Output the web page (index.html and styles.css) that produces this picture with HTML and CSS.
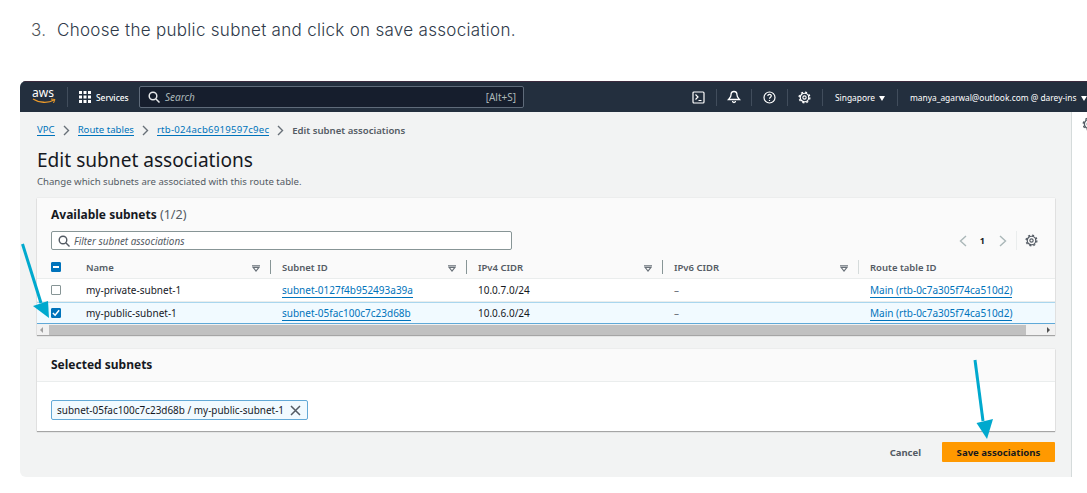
FILE: index.html
```html
<!DOCTYPE html>
<html lang="en">
<head>
  <meta charset="UTF-8" />
  <title>Edit subnet associations</title>
  <link rel="stylesheet" href="styles.css">
</head>
<body>
  <svg class="defs" width="0" height="0">
    <symbol id="engrane" viewBox="0 0 14 14">
      <circle cx="7" cy="7" r="4.600" fill="none" stroke="currentColor" stroke-width="1.300"/>
      <circle cx="7" cy="7" r="5.800" fill="none" stroke="currentColor" stroke-width="1.400" stroke-dasharray="2.200 2.350"/>
      <circle cx="7" cy="7" r="1.800" fill="none" stroke="currentColor" stroke-width="1.200"/>
    </symbol>
  </svg>

  <p class="paso"><span class="paso-num">3.</span>Choose the public subnet and click on save association.</p>

  <div class="captura">
    <header class="nav">
      <div class="logo">
        <span>aws</span>
        <svg width="24" height="6" viewBox="0 0 24 6"><path d="M1 1c6 4 15 4.500 21 1" fill="none" stroke="#ec9a2a" stroke-width="1.400"/><path d="M19 1l4 .5-1.500 3.500" fill="none" stroke="#ec9a2a" stroke-width="1"/></svg>
      </div>
      <div class="servicios">
        <svg width="12" height="12" viewBox="0 0 12 12" fill="#fff"><rect width="3" height="3"/><rect x="4.500" width="3" height="3"/><rect x="9" width="3" height="3"/><rect y="4.500" width="3" height="3"/><rect x="4.500" y="4.500" width="3" height="3"/><rect x="9" y="4.500" width="3" height="3"/><rect y="9" width="3" height="3"/><rect x="4.500" y="9" width="3" height="3"/><rect x="9" y="9" width="3" height="3"/></svg>
        <span>Services</span>
      </div>
      <div class="busqueda">
        <svg width="12" height="12" viewBox="0 0 12 12" fill="none" stroke="#e6e8ea" stroke-width="1.500"><circle cx="5" cy="5" r="3.800"/><path d="M8 8l3.500 3.500"/></svg>
        <em>Search</em>
        <span>[Alt+S]</span>
      </div>
      <div class="nav-der">
        <div class="nav-item">
          <svg width="13" height="13" viewBox="0 0 13 13" fill="none" stroke="#fff" stroke-width="1.200"><rect x="1" y="1" width="11" height="11" rx="1"/><path d="M3.500 3.500l2.500 2.500-2.500 2.500M6.500 9.500h3"/></svg>
        </div>
        <div class="nav-item">
          <svg width="14" height="14" viewBox="0 0 14 14" fill="none" stroke="#fff" stroke-width="1.300"><path d="M7 1.500c-2.300 0-3 1.800-3 3.500 0 2-1.200 3-2.500 4.500h11C11.200 8 10 7 10 5c0-1.700-.7-3.500-3-3.500z"/><path d="M5.500 11a1.500 1.500 0 003 0" /></svg>
        </div>
        <div class="nav-item">
          <svg width="13" height="13" viewBox="0 0 13 13" fill="none" stroke="#fff" stroke-width="1.200"><circle cx="6.500" cy="6.500" r="5.500"/><path d="M4.800 5c0-2.200 3.500-2.200 3.500-.2 0 1.400-1.800 1.400-1.800 3"/><path d="M6.500 9v1"/></svg>
        </div>
        <div class="nav-item">
          <svg class="engrane blanco" width="13" height="13"><use href="#engrane"/></svg>
        </div>
        <div class="nav-texto region">Singapore <i class="caret"></i></div>
        <div class="nav-texto cuenta">manya_agarwal@outlook.com @ darey-ins <i class="caret"></i></div>
      </div>
    </header>

    <div class="cuerpo">
      <main class="contenido">
        <nav class="migas">
          <a>VPC</a>
          <svg class="sep" width="7" height="11" viewBox="0 0 7 11" fill="none" stroke="#687078" stroke-width="1.400"><path d="M1 1l4.500 4.500L1 10"/></svg>
          <a>Route tables</a>
          <svg class="sep" width="7" height="11" viewBox="0 0 7 11" fill="none" stroke="#687078" stroke-width="1.400"><path d="M1 1l4.500 4.500L1 10"/></svg>
          <a class="rtb">rtb-024acb6919597c9ec</a>
          <svg class="sep" width="7" height="11" viewBox="0 0 7 11" fill="none" stroke="#687078" stroke-width="1.400"><path d="M1 1l4.500 4.500L1 10"/></svg>
          <b>Edit subnet associations</b>
        </nav>
        <h1>Edit subnet associations</h1>
        <p class="descripcion">Change which subnets are associated with this route table.</p>

        <section class="tarjeta">
          <div class="tarjeta-top">
            <h2>Available subnets <span>(1/2)</span></h2>
            <div class="filtros">
              <div class="filtro">
                <svg width="12" height="12" viewBox="0 0 12 12" fill="none" stroke="#545b64" stroke-width="1.400"><circle cx="5" cy="5" r="3.800"/><path d="M8 8l3.500 3.500"/></svg>
                <em>Filter subnet associations</em>
              </div>
              <div class="paginas">
                <svg width="8" height="12" viewBox="0 0 8 12" fill="none" stroke="#aab7b8" stroke-width="1.400"><path d="M7 1L1.500 6 7 11"/></svg>
                <b>1</b>
                <svg width="8" height="12" viewBox="0 0 8 12" fill="none" stroke="#aab7b8" stroke-width="1.400"><path d="M1 1l5.500 5L1 11"/></svg>
                <span class="pag-sep"></span>
                <svg class="engrane" width="13" height="13"><use href="#engrane"/></svg>
              </div>
            </div>
          </div>

          <div class="fila fila-head">
            <div class="col-check"><span class="check marcado"><i class="menos"></i></span></div>
            <div class="col">Name<svg class="orden" width="8" height="7" viewBox="0 0 8 7" fill="none" stroke="#687078" stroke-width="1.200"><path d="M0 .8h8M1.200 2.500L4 6l2.800-3.500z"/></svg></div>
            <div class="col">Subnet ID<svg class="orden" width="8" height="7" viewBox="0 0 8 7" fill="none" stroke="#687078" stroke-width="1.200"><path d="M0 .8h8M1.200 2.500L4 6l2.800-3.500z"/></svg></div>
            <div class="col">IPv4 CIDR<svg class="orden" width="8" height="7" viewBox="0 0 8 7" fill="none" stroke="#687078" stroke-width="1.200"><path d="M0 .8h8M1.200 2.500L4 6l2.800-3.500z"/></svg></div>
            <div class="col">IPv6 CIDR<svg class="orden" width="8" height="7" viewBox="0 0 8 7" fill="none" stroke="#687078" stroke-width="1.200"><path d="M0 .8h8M1.200 2.500L4 6l2.800-3.500z"/></svg></div>
            <div class="col ultima">Route table ID</div>
          </div>
          <div class="fila">
            <div class="col-check"><span class="check"></span></div>
            <div class="col">my-private-subnet-1</div>
            <div class="col"><a>subnet-0127f4b952493a39a</a></div>
            <div class="col">10.0.7.0/24</div>
            <div class="col gris">–</div>
            <div class="col ultima"><a>Main (rtb-0c7a305f74ca510d2)</a></div>
          </div>
          <div class="fila activa">
            <div class="col-check">
              <span class="check marcado">
                <svg width="9" height="8" viewBox="0 0 9 8" fill="none" stroke="#fff" stroke-width="1.700"><path d="M1 4l2.500 2.500L8 1"/></svg>
              </span>
            </div>
            <div class="col">my-public-subnet-1</div>
            <div class="col"><a>subnet-05fac100c7c23d68b</a></div>
            <div class="col">10.0.6.0/24</div>
            <div class="col gris">–</div>
            <div class="col ultima"><a>Main (rtb-0c7a305f74ca510d2)</a></div>
          </div>
          <div class="scroll">
            <i class="flecha izq"></i>
            <div class="scroll-barra"></div>
            <i class="flecha der"></i>
          </div>
        </section>

        <section class="tarjeta segunda">
          <div class="tarjeta-titulo"><h2>Selected subnets</h2></div>
          <div class="tarjeta-cuerpo">
            <div class="chip">
              <span>subnet-05fac100c7c23d68b / my-public-subnet-1</span>
              <svg width="11" height="11" viewBox="0 0 11 11" fill="none" stroke="#545b64" stroke-width="1.500"><path d="M1 1l9 9M10 1l-9 9"/></svg>
            </div>
          </div>
        </section>

        <div class="acciones">
          <a class="cancelar">Cancel</a>
          <button class="guardar">Save associations</button>
        </div>
      </main>
      <aside class="lateral">
        <svg class="engrane" width="14" height="14"><use href="#engrane"/></svg>
      </aside>
    </div>
  </div>

  <!-- flechas puestas encima de la captura -->
  <svg class="flechas" width="1087" height="493" viewBox="0 0 1087 493">
    <path d="M22.500 244L41 303" stroke="#00a9ce" stroke-width="3" fill="none"/>
    <path d="M33 306l15-5 1 17z" fill="#00a9ce"/>
    <path d="M975 360l8 61" stroke="#00a9ce" stroke-width="3" fill="none"/>
    <path d="M976.500 423l16.500-4-6 20z" fill="#00a9ce"/>
  </svg>
</body>
</html>
```

FILE: styles.css
```css
* {
  box-sizing: border-box;
}

html, body {
  height: 493px;
  overflow: hidden;
}

body {
  margin: 0;
  background-color: #ffffff;
  font-family: "Noto Sans", sans-serif;
  font-size: 10px;
  color: #16191f;
  position: relative;
}

.defs {
  position: absolute;
}

.engrane {
  color: #545b64;
}

.engrane.blanco {
  color: #ffffff;
}

.paso {
  margin: 0;
  padding: 19px 0 0 31px;
  height: 81px;
  font-family: "Inter", sans-serif;
  font-size: 17px;
  font-weight: 300;
  line-height: 22px;
  letter-spacing: 0.3px;
  color: #2f3a4a;
}

.paso-num {
  display: inline-block;
  width: 26px;
  color: #4f5358;
}

.captura {
  margin-left: 20px;
  height: 396px;
  border-radius: 6px 0 0 6px;
  overflow: hidden;
  background-color: #f2f3f3;
}

/* barra superior */
.nav {
  display: flex;
  align-items: center;
  height: 31px;
  background-color: #232f3e;
  border-top: 1px solid #3a2a3d;
  color: #ffffff;
  white-space: nowrap;
}

.nav > div {
  flex-shrink: 0;
}

.logo {
  width: 47px;
  padding-left: 12px;
  display: flex;
  flex-direction: column;
  font-size: 12px;
  line-height: 10px;
  height: 18px;
}

.servicios {
  display: flex;
  align-items: center;
  gap: 5px;
  width: 72px;
  padding-left: 11px;
  height: 20px;
  border-left: 1px solid #414d5c;
  font-size: 8.400px;
  font-weight: 500;
}

.busqueda {
  display: flex;
  align-items: center;
  width: 385px;
  height: 22px;
  padding: 0 7px 0 8px;
  background-color: #161e2d;
  border: 1px solid #5f6b7a;
  border-radius: 2px;
  color: #aab7b8;
  font-size: 10px;
}

.busqueda svg {
  margin-right: 5px;
}

.busqueda em {
  flex: 1;
}

.nav-der {
  display: flex;
  align-items: center;
  margin-left: 157px;
}

.nav-item {
  width: 35.500px;
  height: 17px;
  display: flex;
  align-items: center;
  justify-content: center;
  border-right: 1px solid #414d5c;
}

.nav-texto {
  font-size: 8.400px;
  height: 17px;
  line-height: 17px;
  white-space: nowrap;
}

.region {
  width: 75px;
  padding-left: 12px;
  border-right: 1px solid #414d5c;
}

.cuenta {
  padding-left: 12px;
}

.caret {
  display: inline-block;
  margin-left: 2px;
  border-left: 3px solid transparent;
  border-right: 3px solid transparent;
  border-top: 5px solid #ffffff;
}

/* contenido */
.cuerpo {
  display: flex;
  height: 365px;
}

.contenido {
  width: 1051px;
  flex-shrink: 0;
  padding: 11px 0 0 17px;
}

.lateral {
  flex: 1;
  background-color: #ffffff;
  border-left: 1px solid #d5dbdb;
  padding: 5px 0 0 10px;
}

.migas {
  display: flex;
  align-items: center;
  height: 14px;
  gap: 8px;
  font-size: 9.600px;
}

.migas a {
  color: #0073bb;
  border-bottom: 1px solid #0073bb;
  line-height: 11px;
}

.migas .rtb {
  letter-spacing: 0.24px;
}

.migas b {
  color: #545b64;
  font-weight: 600;
}

h1 {
  margin: 10px 0 0;
  font-size: 19.100px;
  font-weight: 400;
  line-height: 26px;
  color: #16191f;
}

.descripcion {
  margin: 2px 0 0;
  font-size: 9.600px;
  line-height: 14px;
  color: #545b64;
}

.tarjeta {
  width: 1018px;
  background-color: #ffffff;
  box-shadow: 0 1px 1px rgba(0, 0, 0, 0.3), 0 0 1px rgba(0, 0, 0, 0.15);
}

.tarjeta-top {
  margin-top: 9px;
  height: 60px;
  padding: 8px 14px 0;
  background-color: #fafafa;
}

.tarjeta h2 {
  margin: 0;
  font-size: 12px;
  font-weight: 700;
  line-height: 17px;
}

.tarjeta h2 span {
  font-size: 12.600px;
  font-weight: 400;
  color: #545b64;
}

.filtros {
  display: flex;
  align-items: center;
  margin-top: 8px;
}

.filtro {
  display: flex;
  align-items: center;
  gap: 4px;
  width: 461px;
  height: 19px;
  padding-left: 6px;
  background-color: #ffffff;
  border: 1px solid #879596;
  border-radius: 2px;
  color: #545b64;
  font-size: 9.900px;
}

.paginas {
  display: flex;
  align-items: center;
  margin-left: auto;
  margin-right: 3px;
  font-size: 9px;
}

.paginas b {
  margin: 0 14px 0 13px;
  color: #16191f;
}

.pag-sep {
  width: 1px;
  height: 19px;
  margin: 0 8px 0 9px;
  background-color: #eaeded;
}

.fila {
  display: flex;
  align-items: center;
  height: 22.500px;
  font-size: 10px;
  color: #16191f;
  border-bottom: 1px solid #eaeded;
}

.fila-head {
  height: 21px;
  padding-bottom: 2px;
  background-color: #fafafa;
  color: #545b64;
  font-size: 9.500px;
  font-weight: 600;
  border-bottom: 1px solid #eaeded;
}

.fila.activa {
  background-color: #f1faff;
  border-top: 1px solid #a9d6ee;
  border-bottom: 1px solid #5fa9d8;
  height: 22.500px;
}

.col-check {
  width: 38px;
  padding-left: 14px;
  display: flex;
}

.check {
  width: 10px;
  height: 10px;
  background-color: #ffffff;
  border: 1px solid #879596;
  border-radius: 1px;
  display: flex;
  align-items: center;
  justify-content: center;
}

.check.marcado {
  background-color: #0073bb;
  border-color: #0073bb;
}

.menos {
  width: 6px;
  height: 2px;
  background-color: #ffffff;
}

.col {
  width: 196px;
  padding-left: 11px;
  position: relative;
  white-space: nowrap;
}

.fila-head .col:not(.ultima)::after {
  content: "";
  position: absolute;
  right: 0;
  top: -1px;
  height: 14px;
  width: 1px;
  background-color: #879596;
}

.fila-head .col:nth-child(5)::after {
  background-color: #d5dbdb;
}

.ultima {
  width: 194px;
}

.gris {
  color: #687078;
}

.col a {
  color: #0073bb;
  border-bottom: 1px solid #0073bb;
}

.orden {
  position: absolute;
  right: 11px;
  top: 4px;
}

.scroll {
  display: flex;
  align-items: center;
  height: 11px;
  background-color: #f1f1f1;
}

.scroll-barra {
  width: 977px;
  height: 10px;
  margin-left: 6px;
  background-color: #c1c1c1;
}

.flecha {
  display: block;
  border-top: 3px solid transparent;
  border-bottom: 3px solid transparent;
}

.flecha.izq {
  margin-left: 3px;
  border-right: 3px solid #a0a0a0;
}

.flecha.der {
  margin-left: 21px;
  border-left: 3px solid #505050;
}

.segunda {
  margin-top: 14px;
}

.tarjeta-titulo {
  height: 33px;
  padding: 7px 14px 0;
  background-color: #fafafa;
  border-bottom: 1px solid #eaeded;
}

.tarjeta-cuerpo {
  height: 49px;
  padding: 18px 14px 0;
}

.chip {
  display: inline-flex;
  align-items: center;
  gap: 6px;
  height: 20px;
  padding: 0 6px 0 5px;
  background-color: #f1faff;
  border: 1px solid #63a9d6;
  border-radius: 2px;
  font-size: 9.950px;
  color: #16191f;
}

.acciones {
  display: flex;
  align-items: center;
  justify-content: flex-end;
  width: 1018px;
  margin-top: 11px;
  gap: 21px;
}

.cancelar {
  color: #545b64;
  font-size: 9.500px;
  font-weight: 700;
}

.guardar {
  width: 113px;
  height: 20px;
  padding: 0;
  background-color: #ff9900;
  border: none;
  border-radius: 1px;
  color: #16191f;
  font-family: "Noto Sans", sans-serif;
  font-size: 9.600px;
  font-weight: 700;
}

.flechas {
  position: absolute;
  left: 0;
  top: 0;
  pointer-events: none;
}
```
